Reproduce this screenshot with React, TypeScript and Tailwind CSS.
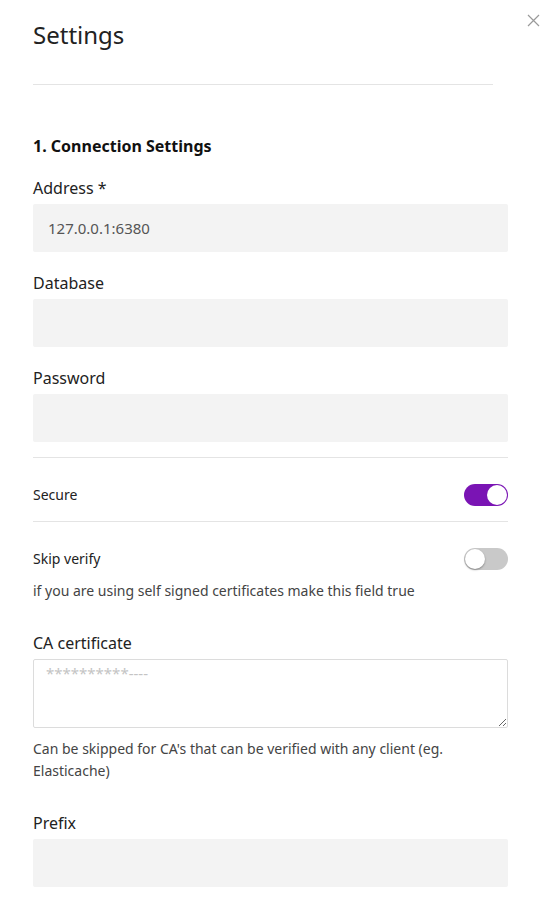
import { useState } from "react";

function Toggle({ checked, onChange }: { checked: boolean; onChange: (v: boolean) => void }) {
  return (
    <button
      type="button"
      onClick={() => onChange(!checked)}
      className={
        checked
          ? "relative h-[22px] w-[44px] shrink-0 rounded-full bg-[#7a14b4]"
          : "relative h-[22px] w-[44px] shrink-0 rounded-full bg-[#c9c9c9]"
      }
    >
      <span
        className={
          checked
            ? "absolute right-[1px] top-[1px] h-[20px] w-[20px] rounded-full bg-white"
            : "absolute left-[1px] top-[1px] h-[20px] w-[20px] rounded-full bg-white shadow-[0_1px_2px_rgba(0,0,0,0.35)]"
        }
      />
    </button>
  );
}

function Field({ label, value, className }: { label: string; value?: string; className?: string }) {
  return (
    <div className={className}>
      <label className="block text-[16px] leading-[24px] text-[#222]">{label}</label>
      <input
        defaultValue={value}
        className="mt-[4px] block h-[48px] w-full rounded-[2px] bg-[#f3f3f3] px-[15px] text-[15px] text-[#555] outline-none"
      />
    </div>
  );
}

export default function App() {
  const [secure, setSecure] = useState(true);
  const [skipVerify, setSkipVerify] = useState(false);

  return (
    <div className="relative min-h-[915px] bg-white font-['Noto_Sans',sans-serif] text-[#222]">
      <button type="button" className="absolute left-[527px] top-[14px] h-[13px] w-[13px]">
        <svg viewBox="0 0 13 13" className="h-[13px] w-[13px]" fill="none" stroke="#9a9a9a" strokeWidth="1.2">
          <path d="M1 1 L12 12 M12 1 L1 12" />
        </svg>
      </button>

      <div className="w-[475px] pl-[33px] box-content">
        <h1 className="pt-[19px] text-[24px] leading-[32px] font-normal text-[#222]">Settings</h1>
        <div className="mt-[33px] h-px w-[460px] bg-[#e4e4e4]" />

        <h2 className="mt-[49px] text-[16px] leading-[24px] font-bold text-[#111]">1. Connection Settings</h2>

        <Field label="Address *" value="127.0.0.1:6380" className="mt-[18px]" />
        <Field label="Database" className="mt-[19px]" />
        <Field label="Password" className="mt-[19px]" />

        <div className="mt-[15px] h-px w-full bg-[#e4e4e4]" />
        <div className="flex items-center justify-between pt-[26px] pb-[15px]">
          <span className="text-[14px] leading-[20px] text-[#222]">Secure</span>
          <Toggle checked={secure} onChange={setSecure} />
        </div>
        <div className="h-px w-full bg-[#e4e4e4]" />

        <div className="mt-[26px] flex h-[22px] items-center justify-between">
          <span className="text-[14px] leading-[20px] text-[#222]">Skip verify</span>
          <Toggle checked={skipVerify} onChange={setSkipVerify} />
        </div>
        <p className="mt-[10px] text-[14px] leading-[22px] text-[#444]">
          if you are using self signed certificates make this field true
        </p>

        <label className="mt-[29px] block text-[16px] leading-[24px] text-[#222]">CA certificate</label>
        <textarea
          placeholder="**********----"
          className="mt-[4px] block h-[69px] w-full rounded-[2px] border border-[#dcdcdc] px-[12px] py-[2px] text-[15px] leading-[22px] text-[#555] outline-none placeholder:text-[#c4c4c4]"
        />
        <p className="mt-[10px] text-[14px] leading-[22px] text-[#444]">
          Can be skipped for CA's that can be verified with any client (eg. Elasticache)
        </p>

        <Field label="Prefix" className="mt-[29px]" />
      </div>
    </div>
  );
}
